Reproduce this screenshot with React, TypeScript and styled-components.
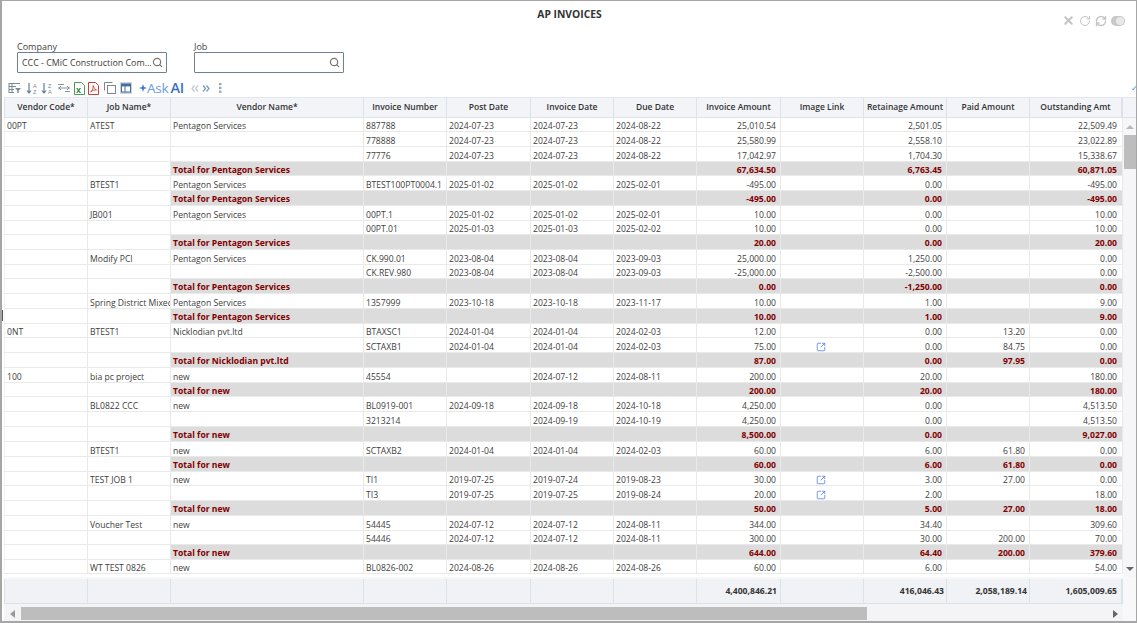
import React from "react";
import styled, { createGlobalStyle } from "styled-components";
import { Search, X, RotateCw, RefreshCw, SquareArrowOutUpRight } from "lucide-react";

const Global = createGlobalStyle`
  html, body { margin: 0; padding: 0; background: #fff; overflow: hidden; }
  * { box-sizing: border-box; }
  #root { width: 1137px; height: 623px; }
`;

const COLS = "83px 83px 193px 83px 84px 83px 83px 84px 83px 83px 83px 94px";

const Page = styled.div`
  width: 1137px; height: 623px; display: flex; flex-direction: column; position: relative;
  border: 1px solid #a6a6a6; border-bottom-width: 2px; border-left-width: 2px;
  padding-left: 2px; background: #fff; overflow: hidden;
  font-family: "Open Sans", "Noto Sans", sans-serif; font-size: 8.6px; color: #404040;
`;
const Splitter = styled.span`
  position: absolute; left: -1px; top: 309px; width: 2px; height: 11px; background: #555;
`;
const TitleBar = styled.div`
  height: 39px; display: flex; position: relative; justify-content: center; padding-top: 6px;
`;
const Title = styled.div`
  font-weight: 700; font-size: 10.3px; color: #333; line-height: 14px; margin-left: -1px;
`;
const WindowIcons = styled.div`
  position: absolute; right: 11px; top: 13px; display: flex; gap: 4px; align-items: center; color: #c4c4c4;
`;
const Toggle = styled.span`
  width: 14px; height: 10px; border-radius: 5px; background: #c8c8c8; position: relative; display: block;
  &::after { content: ""; position: absolute; right: 1px; top: 1px; width: 8px; height: 8px; border-radius: 50%; background: #e8e8e8; }
`;
const Filters = styled.div`
  height: 33px; display: flex; gap: 27px; padding-left: 13px;
`;
const Field = styled.div`
  width: 150px; display: flex; flex-direction: column;
`;
const FieldLabel = styled.label`
  font-size: 9px; line-height: 13px; color: #444; height: 12px;
`;
const InputBox = styled.div`
  height: 21px; border: 1px solid #6f8191; display: flex; align-items: center; padding: 0 3px 0 4px; justify-content: space-between;
  font-size: 8.9px; color: #3c3c3c; border-radius: 1px; white-space: nowrap;
  svg { flex: none; }
`;
const Toolbar = styled.div`
  height: 24px; display: flex; align-items: center; padding: 6px 0 0 4px; position: relative; color: #7c8794;
`;
const ToolIcon = styled.span<{ $w?: number; $mr?: number }>`
  width: ${p => p.$w ?? 12}px; height: 13px; margin-right: ${p => p.$mr ?? 3}px; display: flex; align-items: center; justify-content: center; flex: none;
`;
const AskAi = styled.span`
  display: flex; align-items: center; font-size: 13.5px; color: #6a9bdc; margin: 0 7px 0 0; letter-spacing: -0.2px; line-height: 14px;
  b { font-weight: 600; font-size: 14.5px; color: #3f74b8; margin-left: 2px; }
`;
const Tick = styled.span`
  position: absolute; right: -2px; top: 11px; color: #3f82c8; font-size: 8px; line-height: 8px;
`;
const GridWrap = styled.div`
  flex: 1; min-height: 0; display: flex; flex-direction: column; background: #f8f8fb;
`;
const HeaderRow = styled.div`
  display: grid; grid-template-columns: ${COLS} 1fr; height: 21px; background: #f2f4f8;
  border-top: 1px solid #e4e8ee; border-bottom: 1px solid #dbe2ea;
`;
const HeaderCell = styled.div`
  display: flex; align-items: center; justify-content: center; font-weight: 600; font-size: 8.5px; color: #333;
  border-left: 1px solid #dbe3ea; white-space: nowrap; overflow: hidden; padding-bottom: 2px;
  &:nth-child(12) { border-right: 2px solid #dbe3ea; }
`;
const Middle = styled.div`
  height: 459px; flex: none; display: flex;
`;
const Rows = styled.div`
  width: 1119px; overflow: hidden; flex: none; height: 459px; background: #fff;
`;
const Row = styled.div<{ $h: number }>`
  display: grid; grid-template-columns: ${COLS}; height: ${p => p.$h}px; border-bottom: 1px solid #e9e9e9;
`;
const Cell = styled.div<{ $total?: boolean; $right?: boolean; $center?: boolean }>`
  display: flex; align-items: center; white-space: nowrap; overflow: hidden;
  padding: ${p => (p.$total ? "2px" : "3px")} 0 0 ${p => (p.$center ? "0" : "2px")};
  border-left: 1px solid #e9e9e9; color: ${p => (p.$total ? "#800000" : "#404040")};
  font-weight: ${p => (p.$total ? 700 : 400)};
  background: ${p => (p.$total ? "#dcdcdc" : "#fff")};
  justify-content: ${p => (p.$right ? "flex-end" : p.$center ? "center" : "flex-start")};
  padding-right: ${p => (p.$right ? "4px" : p.$center ? "3px" : "0")};
  &:first-child { border-left-color: #f4f4f4; }
  &:last-child { border-right: 1px solid #e9e9e9; padding-right: 5px; }
`;
const VScroll = styled.div`
  width: 13px; height: 459px; background: #f6f6f8; display: flex; flex-direction: column; align-items: center; flex: none;
`;
const ArrowUp = styled.span`
  margin-top: 7px; width: 0; height: 0; border: 4px solid transparent; border-top: 0; border-bottom: 4px solid #b8b8b8;
`;
const VThumb = styled.span`
  width: 12px; height: 34px; background: #bdbdbd; margin-top: 6px;
`;
const ArrowDown = styled.span`
  margin-top: auto; margin-bottom: 6px; width: 0; height: 0; border: 4px solid transparent; border-bottom: 0; border-top: 4px solid #666;
`;
const FootRow = styled.div`
  display: grid; grid-template-columns: ${COLS} 1fr; height: 25px; margin-top: 2px; border-bottom: 1px solid #dbe2ea;
`;
const FootCell = styled.div`
  background: #f0f2f6; border-left: 1px solid #dbe3ea; display: flex; align-items: center; justify-content: flex-end;
  padding-right: 2px; font-weight: 700; color: #333;
  &:nth-child(8) { padding-right: 3px; }
  &:nth-child(12) { padding-right: 4px; border-right: 2px solid #dbe3ea; }
`;
const FootEnd = styled.div`
  background: #f8f8fb; border-bottom: 1px solid #f8f8fb; margin-bottom: -1px;
`;
const HScroll = styled.div`
  height: 17px; width: 1119px; display: flex; align-items: center; background: #f4f4f6; padding-top: 2px;
`;
const ArrowLeft = styled.span`
  margin-left: 6px; width: 0; height: 0; border: 4px solid transparent; border-left: 0; border-right: 5px solid #9a9a9a;
`;
const HThumb = styled.span`
  width: 846px; height: 13px; background: #bdbdbd; margin-left: 6px;
`;
const ArrowRight = styled.span`
  margin-left: auto; margin-right: 5px; width: 0; height: 0; border: 4px solid transparent; border-right: 0; border-left: 5px solid #666;
`;
const LinkIcon = styled(SquareArrowOutUpRight)`
  color: #4f76f2;
`;

type RowData = { c: string[]; t?: boolean; h: number; link?: boolean };
// columns: code, job, vendor, inv no, post, inv date, due, amount, image, retainage, paid, outstanding
const d = (h: number, code: string, job: string, vendor: string, no: string, post: string, inv: string, due: string, amt: string, ret: string, paid: string, out: string, link = false): RowData => ({
  h, link, c: [code, job, vendor, no, post, inv, due, amt, "", ret, paid, out],
});
const t = (h: number, name: string, amt: string, ret: string, paid: string, out: string): RowData => ({
  h, t: true, c: ["", "", name, "", "", "", "", amt, "", ret, paid, out],
});
const PS = "Pentagon Services";
const TP = "Total for Pentagon Services";
const TN = "Total for new";

const DATA: RowData[] = [
  d(14, "00PT", "ATEST", PS, "887788", "2024-07-23", "2024-07-23", "2024-08-22", "25,010.54", "2,501.05", "", "22,509.49"),
  d(15, "", "", "", "778888", "2024-07-23", "2024-07-23", "2024-08-22", "25,580.99", "2,558.10", "", "23,022.89"),
  d(15, "", "", "", "77776", "2024-07-23", "2024-07-23", "2024-08-22", "17,042.97", "1,704.30", "", "15,338.67"),
  t(14, TP, "67,634.50", "6,763.45", "", "60,871.05"),
  d(15, "", "BTEST1", PS, "BTEST100PT0004.1", "2025-01-02", "2025-01-02", "2025-02-01", "-495.00", "0.00", "", "-495.00"),
  t(15, TP, "-495.00", "0.00", "", "-495.00"),
  d(15, "", "JB001", PS, "00PT.1", "2025-01-02", "2025-01-02", "2025-02-01", "10.00", "0.00", "", "10.00"),
  d(14, "", "", "", "00PT.01", "2025-01-03", "2025-01-03", "2025-02-02", "10.00", "0.00", "", "10.00"),
  t(15, TP, "20.00", "0.00", "", "20.00"),
  d(15, "", "Modify PCI", PS, "CK.990.01", "2023-08-04", "2023-08-04", "2023-09-03", "25,000.00", "1,250.00", "", "0.00"),
  d(14, "", "", "", "CK.REV.980", "2023-08-04", "2023-08-04", "2023-09-03", "-25,000.00", "-2,500.00", "", "0.00"),
  t(15, TP, "0.00", "-1,250.00", "", "0.00"),
  d(15, "", "Spring District Mixed Use", PS, "1357999", "2023-10-18", "2023-10-18", "2023-11-17", "10.00", "1.00", "", "9.00"),
  t(15, TP, "10.00", "1.00", "", "9.00"),
  d(14, "0NT", "BTEST1", "Nicklodian pvt.ltd", "BTAXSC1", "2024-01-04", "2024-01-04", "2024-02-03", "12.00", "0.00", "13.20", "0.00"),
  d(15, "", "", "", "SCTAXB1", "2024-01-04", "2024-01-04", "2024-02-03", "75.00", "0.00", "84.75", "0.00", true),
  t(15, "Total for Nicklodian pvt.ltd", "87.00", "0.00", "97.95", "0.00"),
  d(15, "100", "bia pc project", "new", "45554", "", "2024-07-12", "2024-08-11", "200.00", "20.00", "", "180.00"),
  t(14, TN, "200.00", "20.00", "", "180.00"),
  d(15, "", "BL0822 CCC", "new", "BL0919-001", "2024-09-18", "2024-09-18", "2024-10-18", "4,250.00", "0.00", "", "4,513.50"),
  d(15, "", "", "", "3213214", "", "2024-09-19", "2024-10-19", "4,250.00", "0.00", "", "4,513.50"),
  t(15, TN, "8,500.00", "0.00", "", "9,027.00"),
  d(15, "", "BTEST1", "new", "SCTAXB2", "2024-01-04", "2024-01-04", "2024-02-03", "60.00", "6.00", "61.80", "0.00"),
  t(15, TN, "60.00", "6.00", "61.80", "0.00"),
  d(14, "", "TEST JOB 1", "new", "TI1", "2019-07-25", "2019-07-24", "2019-08-23", "30.00", "3.00", "27.00", "0.00", true),
  d(15, "", "", "", "TI3", "2019-07-25", "2019-07-25", "2019-08-24", "20.00", "2.00", "", "18.00", true),
  t(15, TN, "50.00", "5.00", "27.00", "18.00"),
  d(15, "", "Voucher Test", "new", "54445", "2024-07-12", "2024-07-12", "2024-08-11", "344.00", "34.40", "", "309.60"),
  d(14, "", "", "", "54446", "2024-07-12", "2024-07-12", "2024-08-11", "300.00", "30.00", "200.00", "70.00"),
  t(15, TN, "644.00", "64.40", "200.00", "379.60"),
  d(14, "", "WT TEST 0826", "new", "BL0826-002", "2024-08-26", "2024-08-26", "2024-08-26", "60.00", "6.00", "", "54.00"),
];

const HEADERS = ["Vendor Code*", "Job Name*", "Vendor Name*", "Invoice Number", "Post Date", "Invoice Date", "Due Date", "Invoice Amount", "Image Link", "Retainage Amount", "Paid Amount", "Outstanding Amt"];
const FOOT: Record<number, string> = { 7: "4,400,846.21", 9: "416,046.43", 10: "2,058,189.14", 11: "1,605,009.65" };
const RIGHT = new Set([7, 9, 10, 11]);

const FilterIcon = () => (
  <svg width="13" height="12" viewBox="0 0 13 12" fill="none" stroke="#7c8794" strokeWidth="1">
    <path d="M1 1.5h11M1 4.5h7M1 7.5h5M1 10.5h5" /><path d="M7 6h6l-2.3 2.5V11H9.3V8.5z" fill="#7c8794" stroke="none" /><path d="M1 1v10M4 1v10" />
  </svg>
);
const SortIcon = ({ flip }: { flip?: boolean }) => (
  <svg width="12" height="13" viewBox="0 0 12 13">
    <path d="M3 1v10M1 8.5L3 11l2-2.5" fill="none" stroke="#5f7f9f" strokeWidth="1.2" />
    <text x="7" y="5.5" fontSize="5.5" fill="#7c8794" fontFamily="Liberation Sans">{flip ? "Z" : "A"}</text>
    <text x="7" y="12" fontSize="5.5" fill="#7c8794" fontFamily="Liberation Sans">{flip ? "A" : "Z"}</text>
  </svg>
);
const GroupIcon = () => (
  <svg width="12" height="10" viewBox="0 0 12 10" fill="none" stroke="#8b95a1" strokeWidth="1">
    <path d="M0 1.5h6M0 5h12M7 8.5h5M3 3l-2 2 2 2M9 3l2 2-2 2" />
  </svg>
);
const ExcelIcon = () => (
  <svg width="11" height="13" viewBox="0 0 11 13">
    <path d="M.5.5h7l3 3v9h-10z" fill="#fff" stroke="#4d9a5c" />
    <text x="2" y="10.5" fontSize="9" fontWeight="700" fill="#2c7f3f" fontFamily="Liberation Sans">x</text>
  </svg>
);
const PdfIcon = () => (
  <svg width="11" height="13" viewBox="0 0 11 13" fill="none">
    <path d="M.5.5h7l3 3v9h-10z" fill="#fff" stroke="#c5433a" />
    <path d="M2.5 10c2-1 3-4 2.6-6.5C6 6 7 7.5 8.5 8c-2-.2-4 .3-6 2z" stroke="#c5433a" strokeWidth=".9" />
  </svg>
);
const CopyIcon = () => (
  <svg width="12" height="12" viewBox="0 0 12 12" fill="none" stroke="#7c8794">
    <path d="M.5 8.5V.5h8" /><rect x="3.5" y="3.5" width="8" height="8" fill="#fff" />
  </svg>
);
const LayoutIcon = () => (
  <svg width="12" height="12" viewBox="0 0 12 12">
    <rect width="12" height="12" fill="#d2d2d2" />
    <rect x="1.5" y="2" width="9" height="8" fill="#fff" stroke="#3e6ea8" />
    <rect x="1.5" y="2" width="9" height="2.4" fill="#3e6ea8" />
    <path d="M5 4v6" stroke="#3e6ea8" />
  </svg>
);
const Spark = () => (
  <svg width="8" height="8" viewBox="0 0 8 8"><path d="M4 0l1 3 3 1-3 1-1 3-1-3-3-1 3-1z" fill="#3f7cc9" /></svg>
);
const Chevrons = ({ dir, color }: { dir: "l" | "r"; color: string }) => (
  <svg width="8" height="7" viewBox="0 0 8 7" fill="none" stroke={color} strokeWidth="1.3">
    {dir === "l" ? <path d="M3.5 .5L1 3.5l2.5 3M7 .5L4.5 3.5 7 6.5" /> : <path d="M1 .5l2.5 3L1 6.5M4.5 .5L7 3.5 4.5 6.5" />}
  </svg>
);
const Kebab = () => (
  <svg width="3" height="10" viewBox="0 0 3 10" fill="#9aa3ad"><rect y="0" width="2.4" height="2.2" /><rect y="3.8" width="2.4" height="2.2" /><rect y="7.6" width="2.4" height="2.2" /></svg>
);

export default function App() {
  return (
    <Page>
      <Global />
      <Splitter />
      <TitleBar>
        <Title>AP INVOICES</Title>
        <WindowIcons>
          <X size={13} strokeWidth={3.8} />
          <RotateCw size={12} strokeWidth={2} />
          <RefreshCw size={12} strokeWidth={2.8} />
          <Toggle />
        </WindowIcons>
      </TitleBar>
      <Filters>
        <Field>
          <FieldLabel>Company</FieldLabel>
          <InputBox>CCC - CMiC Construction Com...<Search size={11} color="#777" strokeWidth={2.6} /></InputBox>
        </Field>
        <Field>
          <FieldLabel>Job</FieldLabel>
          <InputBox><span /><Search size={11} color="#777" strokeWidth={2.6} /></InputBox>
        </Field>
      </Filters>
      <Toolbar>
        <ToolIcon $w={13} $mr={5}><FilterIcon /></ToolIcon>
        <ToolIcon><SortIcon /></ToolIcon>
        <ToolIcon $mr={5}><SortIcon flip /></ToolIcon>
        <ToolIcon $mr={4}><GroupIcon /></ToolIcon>
        <ToolIcon $w={11} $mr={3}><ExcelIcon /></ToolIcon>
        <ToolIcon $w={11} $mr={5}><PdfIcon /></ToolIcon>
        <ToolIcon $mr={4}><CopyIcon /></ToolIcon>
        <ToolIcon $mr={7}><LayoutIcon /></ToolIcon>
        <AskAi><Spark />Ask<b>AI</b></AskAi>
        <ToolIcon $w={8} $mr={3}><Chevrons dir="l" color="#c2cad2" /></ToolIcon>
        <ToolIcon $w={8} $mr={9}><Chevrons dir="r" color="#7c9cc0" /></ToolIcon>
        <ToolIcon $w={3}><Kebab /></ToolIcon>
        <Tick>✓</Tick>
      </Toolbar>
      <GridWrap>
        <HeaderRow>
          {HEADERS.map(h => <HeaderCell key={h}>{h}</HeaderCell>)}
        </HeaderRow>
        <Middle>
          <Rows>
            {DATA.map((r, i) => (
              <Row key={i} $h={r.h}>
                {r.c.map((v, j) => (
                  <Cell key={j} $total={r.t && j >= 2} $right={RIGHT.has(j)} $center={j === 8}>
                    {j === 8 && r.link ? <LinkIcon size={10} strokeWidth={1.8} /> : v}
                  </Cell>
                ))}
              </Row>
            ))}
          </Rows>
          <VScroll><ArrowUp /><VThumb /><ArrowDown /></VScroll>
        </Middle>
        <FootRow>
          {HEADERS.map((h, i) => <FootCell key={h}>{FOOT[i] ?? ""}</FootCell>)}
          <FootEnd />
        </FootRow>
        <HScroll><ArrowLeft /><HThumb /><ArrowRight /></HScroll>
      </GridWrap>
    </Page>
  );
}
